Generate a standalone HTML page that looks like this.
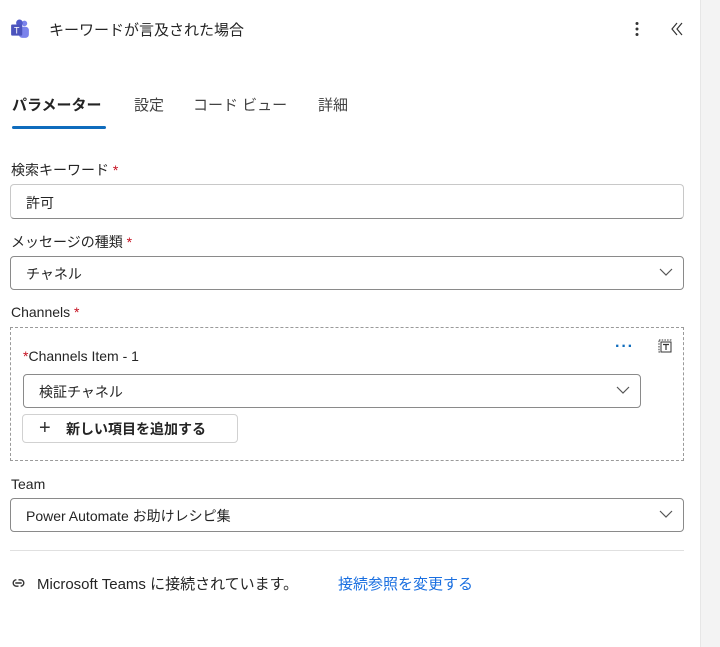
<!DOCTYPE html>
<html><head><meta charset="utf-8"><style>
*{box-sizing:border-box;margin:0;padding:0}
body{width:720px;height:647px;background:#fff;font-family:"Liberation Sans","Noto Sans CJK JP",sans-serif;color:#242424;position:relative;overflow:hidden;font-size:14px}
.a{position:absolute}
.box{position:absolute;border:1px solid #8a8a8a;border-radius:4px;background:#fff}
.inp{border-color:#c8c8c8;border-bottom-color:#8a8a8a}
.lab{position:absolute;font-size:14px;line-height:18px}
.req{color:#c50f1f}
.txt{position:absolute;left:15px;top:8px;font-size:14px;line-height:18px}
.chev{position:absolute;right:10px;top:10px}
</style></head><body>
<div class="a" style="left:700px;top:0;width:20px;height:647px;background:#f3f3f3;border-left:1px solid #e6e6e6"></div>
<svg class="a" style="left:11px;top:19px" width="18" height="20" viewBox="0 0 16 18">
<circle cx="12" cy="4" r="2.5" fill="#7b83eb"/><circle cx="7.5" cy="3.5" r="3" fill="#5059c9"/>
<rect x="7" y="7" width="9" height="10" rx="3" fill="#7b83eb"/>
<rect x="0" y="5" width="10" height="10" rx="1" fill="#4b53bc"/>
<text x="5" y="13" font-size="8" fill="#fff" text-anchor="middle" font-family="Liberation Sans">T</text></svg>
<div class="a" style="left:49px;top:21px;font-size:15px;line-height:20px">キーワードが言及された場合</div>
<svg class="a" style="left:634px;top:21px" width="6" height="16"><circle cx="3" cy="2.5" r="1.5" fill="#333"/><circle cx="3" cy="8" r="1.5" fill="#333"/><circle cx="3" cy="13.5" r="1.5" fill="#333"/></svg>
<svg class="a" style="left:670px;top:22px" width="14" height="14" viewBox="0 0 14 14"><path d="M7 1L2 7L7 13M12 1L7 7L12 13" stroke="#333" stroke-width="1.2" fill="none"/></svg>
<div class="a" style="left:12px;top:96px;font-size:15px;font-weight:bold;line-height:20px">パラメーター</div>
<div class="a" style="left:134px;top:96px;font-size:15px;line-height:20px;color:#424242">設定</div>
<div class="a" style="left:193px;top:96px;font-size:15px;line-height:20px;color:#424242">コード ビュー</div>
<div class="a" style="left:318px;top:96px;font-size:15px;line-height:20px;color:#424242">詳細</div>
<div class="a" style="left:12px;top:126px;width:94px;height:3px;border-radius:2px;background:#0f6cbd"></div>

<div class="lab" style="left:11px;top:161px">検索キーワード <span class="req">*</span></div>
<div class="box inp" style="left:10px;top:184px;width:674px;height:35px"><div class="txt" style="top:9px">許可</div></div>

<div class="lab" style="left:11px;top:233px">メッセージの種類 <span class="req">*</span></div>
<div class="box" style="left:10px;top:256px;width:674px;height:34px"><div class="txt">チャネル</div>
<svg class="chev" width="14" height="10"><path d="M1 2L7 8L13 2" stroke="#555" stroke-width="1.2" fill="none"/></svg></div>

<div class="lab" style="left:11px;top:303px">Channels <span class="req">*</span></div>
<div class="a" style="left:10px;top:327px;width:674px;height:134px;border:1px dashed #9a9a9a"></div>
<div class="lab" style="left:23px;top:347px"><span class="req">*</span>Channels Item - 1</div>
<div class="a" style="left:615px;top:338px;color:#0f6cbd;font-size:16px;font-weight:bold;letter-spacing:1px">···</div>
<svg class="a" style="left:656px;top:337px" width="18" height="18" viewBox="0 0 18 18"><rect x="3" y="3" width="12" height="12" fill="none" stroke="#333" stroke-dasharray="1.5 1.2"/><rect x="5" y="5" width="10" height="10" fill="none" stroke="#333"/><path d="M7 7.5H13M10 7.5V13" stroke="#333" stroke-width="1.2"/></svg>
<div class="box" style="left:23px;top:374px;width:618px;height:34px"><div class="txt">検証チャネル</div>
<svg class="chev" width="14" height="10"><path d="M1 2L7 8L13 2" stroke="#555" stroke-width="1.2" fill="none"/></svg></div>
<div class="box" style="left:22px;top:414px;width:216px;height:29px;border-color:#d1d1d1"><div class="a" style="left:16px;top:3px;font-size:20px;line-height:20px;color:#333">+</div><div class="a" style="left:43px;top:5px;font-weight:bold;font-size:14px;line-height:18px">新しい項目を追加する</div></div>

<div class="lab" style="left:11px;top:475px">Team</div>
<div class="box" style="left:10px;top:498px;width:674px;height:34px"><div class="txt">Power Automate お助けレシピ集</div>
<svg class="chev" width="14" height="10"><path d="M1 2L7 8L13 2" stroke="#555" stroke-width="1.2" fill="none"/></svg></div>

<div class="a" style="left:10px;top:550px;width:674px;height:1px;background:#e0e0e0"></div>
<svg class="a" style="left:10px;top:576px" width="17" height="14" viewBox="0 0 16 12"><path d="M6 3a3 3 0 1 0 0 6h2M10 9a3 3 0 1 0 0-6H8M5 6h6" stroke="#333" stroke-width="1.3" fill="none"/></svg>
<div class="a" style="left:37px;top:575px;font-size:15px;line-height:20px">Microsoft Teams に接続されています。</div>
<div class="a" style="left:338px;top:575px;font-size:15px;line-height:20px;color:#1a6fe0">接続参照を変更する</div>
</body></html>
